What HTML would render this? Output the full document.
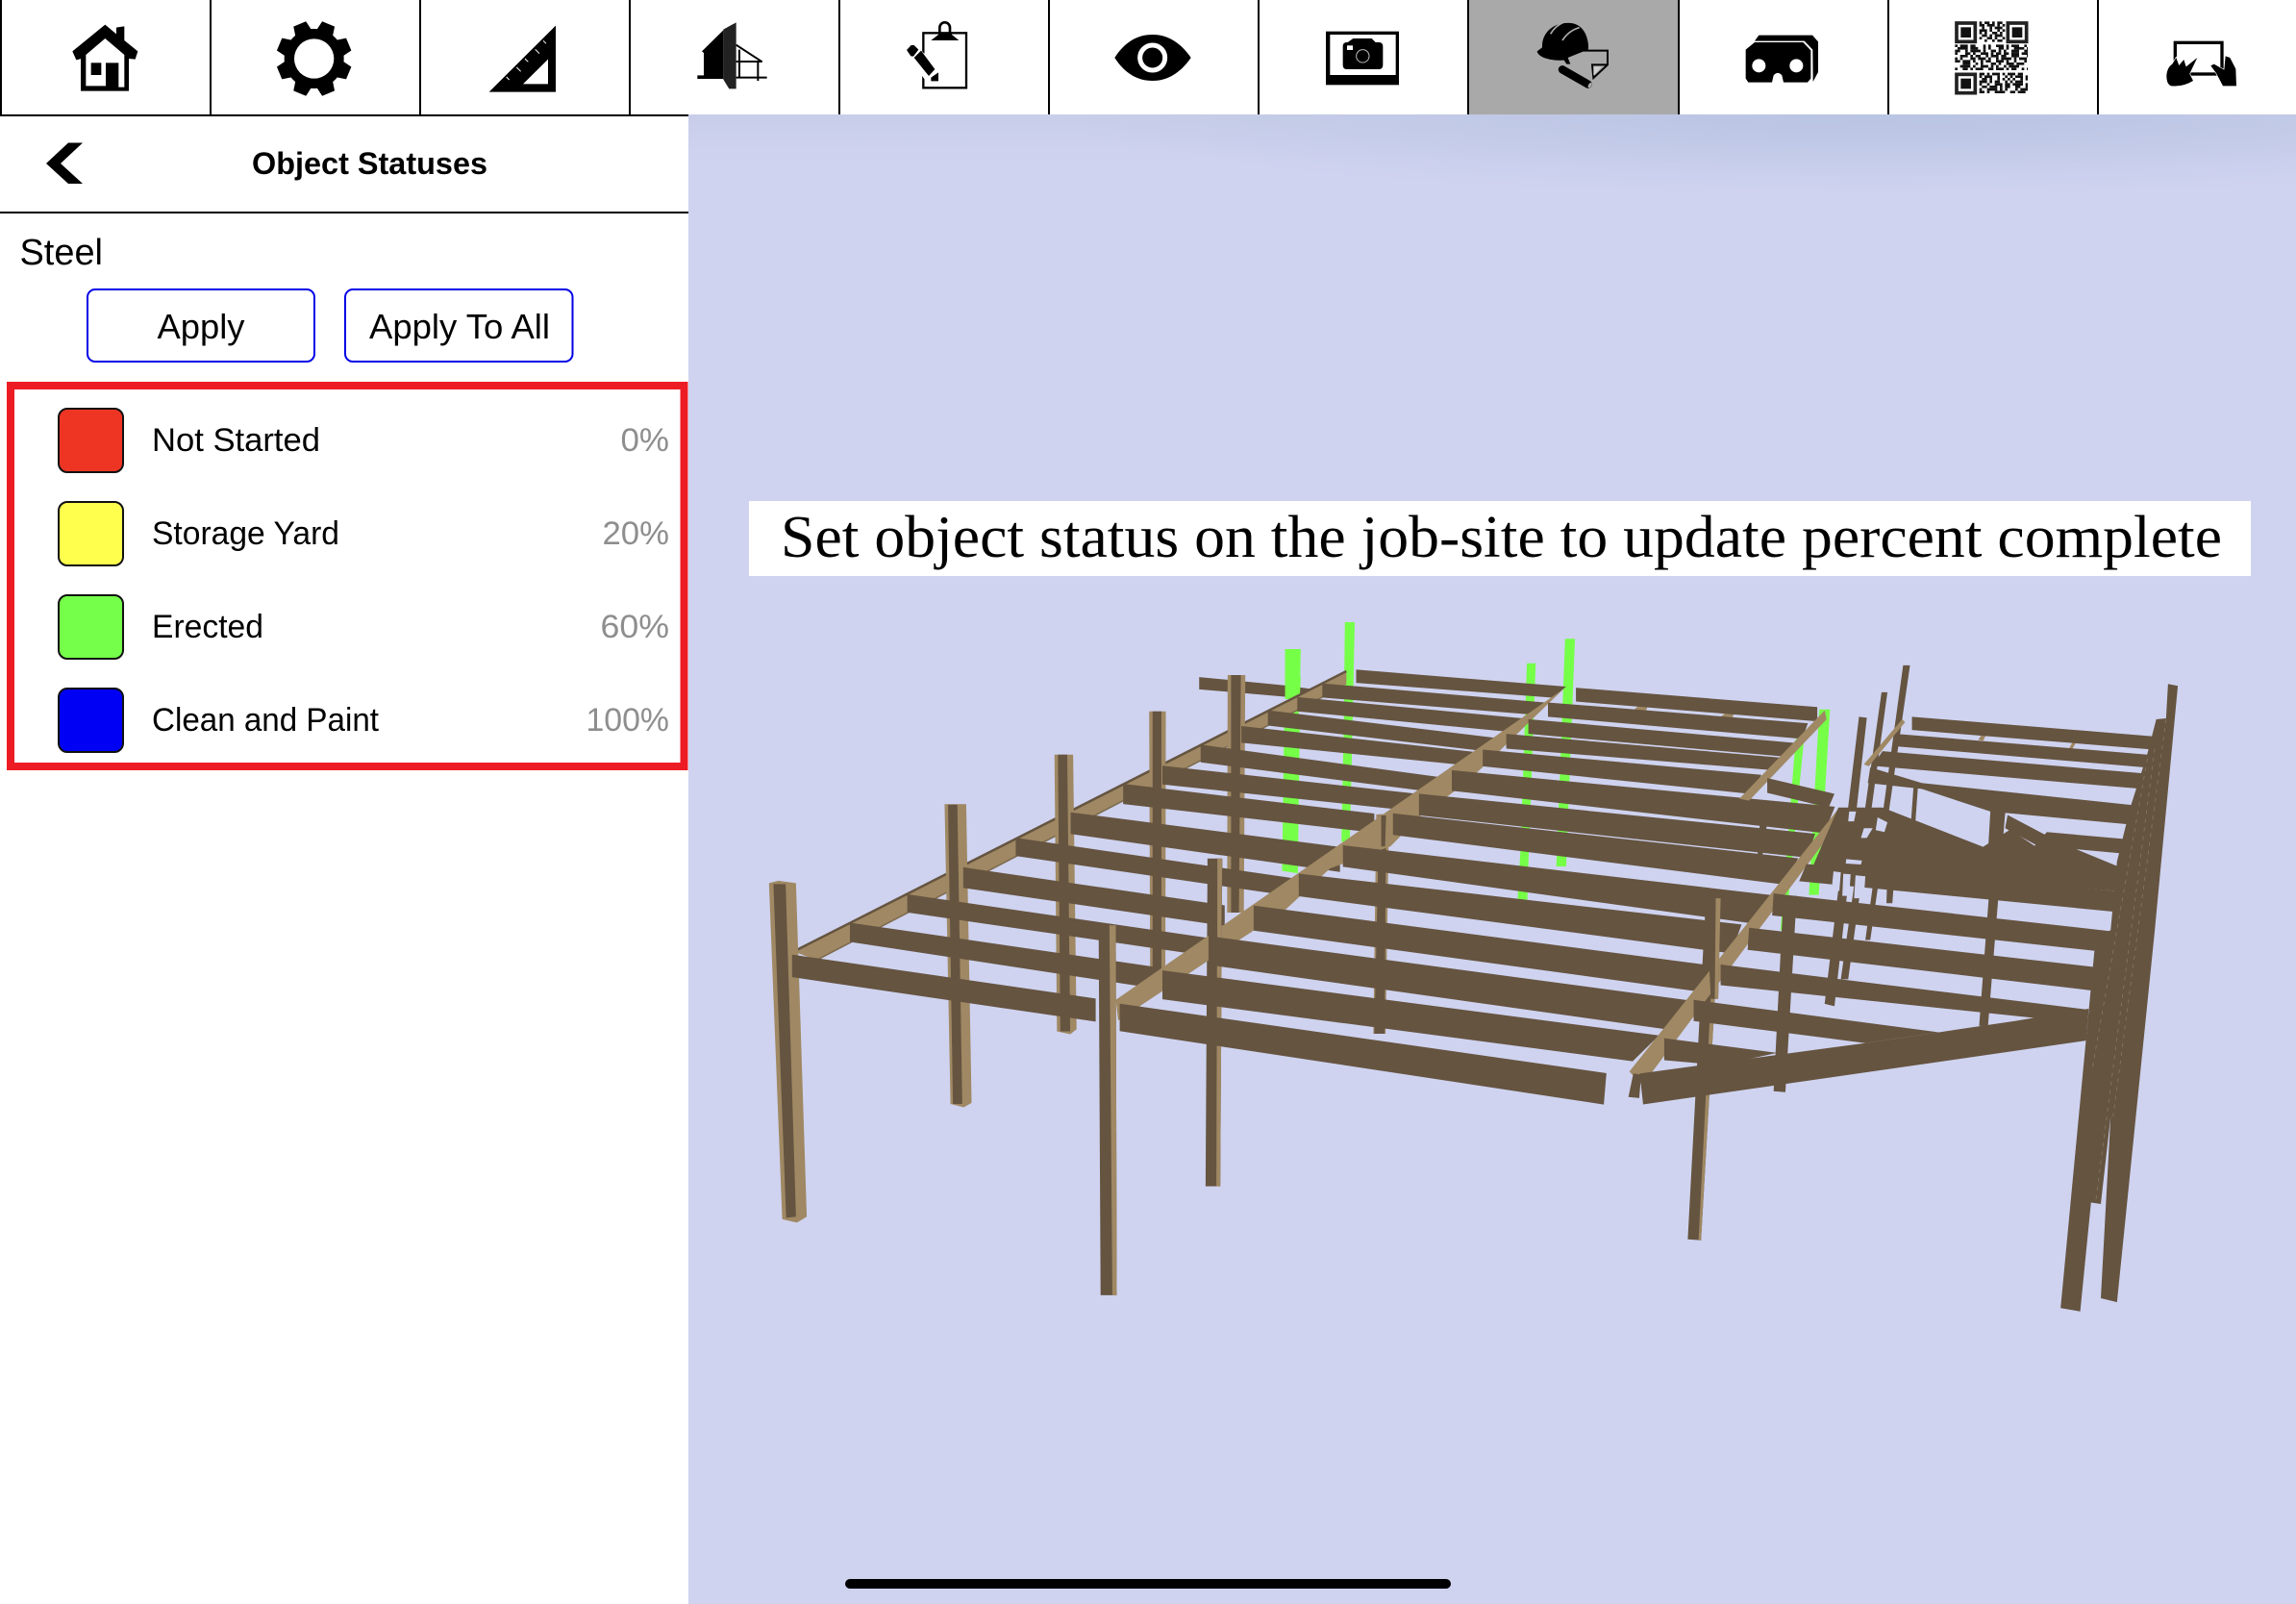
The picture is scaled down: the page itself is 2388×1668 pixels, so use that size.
<!DOCTYPE html>
<html lang="en">
<head>
<meta charset="utf-8">
<title>Object Statuses</title>
<style>
html,body{margin:0;padding:0;background:#fff;width:2388px;height:1668px;overflow:hidden}
svg{position:absolute;left:0;top:0;display:block}
.sans{font-family:"Liberation Sans",sans-serif}
.serif{font-family:"Liberation Serif",serif}
.d{fill:#655440}.l{fill:#9f8863}.g{fill:#76ff47}
.rows polygon{stroke:#655440;stroke-width:4;stroke-linejoin:miter}
</style>
</head>
<body>
<svg width="2388" height="1668" viewBox="0 0 2388 1668" xmlns="http://www.w3.org/2000/svg">
<defs>
<linearGradient id="sky" x1="0" y1="0" x2="0" y2="1"><stop offset="0" stop-color="#c8cee9"/><stop offset="1" stop-color="#cfd3f0"/></linearGradient>
<radialGradient id="glow" gradientUnits="userSpaceOnUse" cx="1950" cy="119" r="1" gradientTransform="translate(1950,119) scale(850,85) translate(-1950,-119)">
<stop offset="0" stop-color="#b9c4e3"/><stop offset="1" stop-color="#b9c4e3" stop-opacity="0"/></radialGradient>
</defs>
<rect width="2388" height="1668" fill="#fff"/>
<rect x="716" y="119" width="1672" height="1549" fill="#cfd3f0"/>
<rect x="716" y="119" width="1672" height="50" fill="url(#sky)"/>
<rect x="716" y="119" width="1672" height="90" fill="url(#glow)"/>

<!-- toolbar -->
<rect x="1527" y="0" width="218" height="119" fill="#a9a9a9"/>
<g fill="#000">
<rect x="0" y="0" width="2" height="119"/><rect x="218" y="0" width="2" height="119"/><rect x="436" y="0" width="2" height="119"/><rect x="654" y="0" width="2" height="119"/><rect x="872" y="0" width="2" height="119"/><rect x="1090" y="0" width="2" height="119"/><rect x="1308" y="0" width="2" height="119"/><rect x="1526" y="0" width="2" height="119"/><rect x="1745" y="0" width="2" height="119"/><rect x="1963" y="0" width="2" height="119"/><rect x="2181" y="0" width="2" height="119"/>
<rect x="0" y="119" width="716" height="2"/>
<rect x="0" y="220" width="716" height="2"/>
</g>

<!-- home, gear, ruler -->
<g transform="translate(60,10) scale(.33333)">
<path d="M148 47L183 76V56L208 52V96L250 130L242 155L222 153L148 90L74 153L58 157L46 130Z"/>
<path d="M72 140L88 128V238H150V166H190V242H208V128L222 140V254H72Z"/>
<rect x="104" y="166" width="32" height="38"/>
<circle cx="800" cy="153" r="93"/>
<g>
<polygon points="-27,-86 -21,-117 21,-117 27,-86" transform="translate(800,153) rotate(22.5)"/>
<polygon points="-27,-86 -21,-117 21,-117 27,-86" transform="translate(800,153) rotate(67.5)"/>
<polygon points="-27,-86 -21,-117 21,-117 27,-86" transform="translate(800,153) rotate(112.5)"/>
<polygon points="-27,-86 -21,-117 21,-117 27,-86" transform="translate(800,153) rotate(157.5)"/>
<polygon points="-27,-86 -21,-117 21,-117 27,-86" transform="translate(800,153) rotate(202.5)"/>
<polygon points="-27,-86 -21,-117 21,-117 27,-86" transform="translate(800,153) rotate(247.5)"/>
<polygon points="-27,-86 -21,-117 21,-117 27,-86" transform="translate(800,153) rotate(292.5)"/>
<polygon points="-27,-86 -21,-117 21,-117 27,-86" transform="translate(800,153) rotate(337.5)"/>
</g>
<circle cx="800" cy="153" r="62" fill="#fff"/>
<path d="M1346 257L1554 50V257ZM1452 232H1530V155Z" fill-rule="evenodd"/>
<path d="M1515 97L1524 106M1490 124L1503 137M1458 153L1468 163M1432 180L1445 193M1400 210L1409 219" stroke="#fff" stroke-width="3" fill="none"/>
</g>

<!-- building, clipboard, eye -->
<g transform="translate(720,10) scale(.33333)">
<path d="M30 130L97 64V216H16V205H36V135Z"/>
<path d="M97 62L137 40V247H115L97 218Z" fill="#222"/>
<path d="M137 110L218 163M137 162H218M147 125V212M205 160V222M137 212H233" stroke="#000" stroke-width="6" fill="none"/>
<rect x="721" y="73" width="134" height="171" fill="none" stroke="#000" stroke-width="7"/>
<path d="M745 96L768 78V72H810V78L832 96Z"/>
<path d="M772 76V56A16 16 0 0 1 804 56V76" fill="none" stroke="#000" stroke-width="8"/>
<polygon points="660,125 685,100 780,190 780,232 735,232" fill="#fff"/>
<path d="M669 126L683 111L692 111L706 125L690 146L682 145Z"/>
<path d="M692 150L714 128L757 186L738 207Z"/>
<path d="M745 212L768 196V223H745Z"/>
<path d="M1318 150C1350 100 1390 78 1436 78C1485 78 1525 105 1556 150C1525 195 1485 222 1436 222C1390 222 1350 200 1318 150Z"/>
<circle cx="1436" cy="150" r="39" fill="none" stroke="#fff" stroke-width="15"/>
</g>

<!-- camera, helmet, vr -->
<g transform="translate(1370,10) scale(.33333)">
<rect x="27" y="68" width="228" height="167"/>
<rect x="40" y="78" width="205" height="126" fill="#fff"/>
<path d="M95 102L112 90H170L182 102H192Q205 102 205 115V172Q205 186 192 186H93Q80 186 80 172V115Q80 102 93 102Z"/>
<rect x="93" y="112" width="18" height="14" fill="#fff"/>
<circle cx="142" cy="145" r="20" fill="none" stroke="#bbb" stroke-width="3"/>
<path d="M686 130L702 118C700 70 740 38 790 42C830 45 848 85 846 124L782 150L790 170L778 170L770 158C730 160 690 150 686 130Z"/>
<path d="M728 76C738 58 752 46 772 38M765 96C778 76 796 62 818 56" stroke="#a9a9a9" stroke-width="5" fill="none"/>
<path d="M830 128H906V172L862 213L858 172H906" fill="none" stroke="#000" stroke-width="6"/>
<path d="M862 178H888L862 206Z" fill="#d0d0d0"/>
<path d="M765 187L845 233" stroke="#000" stroke-width="25" stroke-linecap="round"/>
<ellipse cx="851" cy="236" rx="5" ry="9" fill="#a9a9a9" transform="rotate(30 851 236)"/>
<path d="M1365 98L1378 80H1545L1563 100V195L1547 225L1546 125L1520 98Z"/>
<path d="M1337 125L1365 102H1516L1540 127V215L1530 227H1455L1450 205Q1437 190 1424 205L1419 227H1345L1337 215Z"/>
<circle cx="1378" cy="175" r="21" fill="#fff"/><circle cx="1495" cy="175" r="21" fill="#fff"/>
</g>

<!-- qr + hands -->
<g transform="translate(1900,10) scale(.33333)">
<g fill="none" stroke="#222" stroke-width="11">
<rect x="405" y="42" width="58" height="58"/><rect x="565" y="42" width="58" height="58"/><rect x="405" y="202" width="58" height="58"/>
</g>
<rect x="418" y="55" width="32" height="32" fill="#111"/><rect x="578" y="55" width="32" height="32" fill="#111"/><rect x="418" y="215" width="32" height="32" fill="#111"/>
<g fill="none" stroke="#111" stroke-width="8">
<path d="M476 41H556" stroke-dasharray="8 8 16 8 8 8 16 8"/>
<path d="M476 49H556" stroke-dasharray="16 8 24 8 8 8"/>
<path d="M484 57H556" stroke-dasharray="8 16 8 8 24 8"/>
<path d="M476 65H556" stroke-dasharray="24 8 8 16 8 8"/>
<path d="M476 73H556" stroke-dasharray="8 8 8 16 16 8"/>
<path d="M484 81H556" stroke-dasharray="16 8 8 8 24 8"/>
<path d="M476 89H556" stroke-dasharray="8 16 16 8 8 16"/>
<path d="M492 97H556" stroke-dasharray="8 16 8 8 16 8"/>
<path d="M400 113H627" stroke-dasharray="8 8 24 8 16 24 8 8 8 16 24 8 8 8 24 16"/>
<path d="M408 121H627" stroke-dasharray="32 8 24 16 8 8 8 24 16 8 8 16"/>
<path d="M400 129H627" stroke-dasharray="16 16 8 8 32 8 8 16 16 8 8 8 8 16 24"/>
<path d="M400 137H627" stroke-dasharray="8 24 16 8 8 16 24 8 8 8 16 8 16 8 24"/>
<path d="M416 145H627" stroke-dasharray="24 8 8 8 16 16 8 8 24 8 16 16 24"/>
<path d="M400 153H627" stroke-dasharray="8 8 8 24 16 8 24 8 8 16 8 8 32"/>
<path d="M400 161H627" stroke-dasharray="16 8 24 8 8 16 8 8 16 16 24 8 8"/>
<path d="M424 169H627" stroke-dasharray="24 16 8 8 8 24 16 8 8 16 24 8"/>
<path d="M416 177H627" stroke-dasharray="32 8 8 16 24 8 8 8 8 16 8 8 32"/>
<path d="M400 185H627" stroke-dasharray="8 16 16 8 8 8 24 16 16 8 24 8 8"/>
<path d="M476 201H627" stroke-dasharray="16 8 8 8 24 8 8 8 24 8 16"/>
<path d="M476 209H627" stroke-dasharray="8 8 24 16 8 16 8 8 8 8 24"/>
<path d="M484 217H627" stroke-dasharray="16 8 8 16 8 8 8 8 8 8 8"/>
<path d="M476 225H627" stroke-dasharray="24 8 8 8 16 16 8 8 8 8 24"/>
<path d="M476 233H627" stroke-dasharray="8 16 8 16 24 8 16 8 32"/>
<path d="M484 241H627" stroke-dasharray="16 8 24 8 8 8 16 16 16 16"/>
<path d="M476 249H627" stroke-dasharray="8 16 32 8 8 8 8 24 8 8 24"/>
<path d="M476 257H627" stroke-dasharray="16 8 8 16 32 16 16 8 24"/>
</g>
<rect x="1087" y="103" width="146" height="98" fill="none" stroke="#000" stroke-width="10"/>
<g stroke="#fff" stroke-width="4" paint-order="stroke">
<path d="M1060 205Q1062 180 1078 170L1090 150L1099 174L1114 156L1121 178L1156 150L1132 200L1143 222Q1110 242 1075 238Q1060 234 1060 205Z"/>
<path d="M1198 175L1208 170L1240 188L1244 145L1258 150L1276 185L1278 238H1236L1215 198Z"/>
</g>
</g>

<!-- sidebar -->
<polygon points="48,170 71,148.5 86,148.5 63,170 86,191 71,191"/>
<text class="sans" x="262" y="181" font-size="32.5" font-weight="700" textLength="245" lengthAdjust="spacingAndGlyphs">Object Statuses</text>
<text class="sans" x="20.5" y="275" font-size="38" textLength="86.5" lengthAdjust="spacingAndGlyphs">Steel</text>
<rect x="91" y="301" width="236" height="75" rx="8" fill="#fff" stroke="#0000e6" stroke-width="2"/>
<rect x="359" y="301" width="236.5" height="75" rx="8" fill="#fff" stroke="#0000e6" stroke-width="2"/>
<text class="sans" x="163.5" y="352" font-size="36" textLength="91" lengthAdjust="spacingAndGlyphs">Apply</text>
<text class="sans" x="384" y="352" font-size="36" textLength="188" lengthAdjust="spacingAndGlyphs">Apply To All</text>

<rect x="11" y="401" width="700.5" height="396" fill="#fff" stroke="#ed1c24" stroke-width="8"/>
<rect x="61" y="425" width="67" height="66" rx="9" fill="#ee3524" stroke="#111" stroke-width="2"/>
<rect x="61" y="522" width="67" height="66" rx="9" fill="#ffff4d" stroke="#111" stroke-width="2"/>
<rect x="61" y="619" width="67" height="66" rx="9" fill="#75ff4a" stroke="#111" stroke-width="2"/>
<rect x="61" y="716" width="67" height="66" rx="9" fill="#0000f5" stroke="#111" stroke-width="2"/>
<g class="sans" font-size="34.5">
<text x="158" y="469" textLength="175" lengthAdjust="spacingAndGlyphs">Not Started</text>
<text x="158" y="566" textLength="195" lengthAdjust="spacingAndGlyphs">Storage Yard</text>
<text x="158" y="663" textLength="116" lengthAdjust="spacingAndGlyphs">Erected</text>
<text x="158" y="760" textLength="236" lengthAdjust="spacingAndGlyphs">Clean and Paint</text>
<g fill="#8e8e8e">
<text x="645.5" y="469" textLength="50.5" lengthAdjust="spacingAndGlyphs">0%</text>
<text x="626.5" y="566" textLength="69.5" lengthAdjust="spacingAndGlyphs">20%</text>
<text x="624.5" y="663" textLength="71.5" lengthAdjust="spacingAndGlyphs">60%</text>
<text x="609.5" y="760" textLength="86.5" lengthAdjust="spacingAndGlyphs">100%</text>
</g>
</g>

<!-- caption -->
<rect x="779" y="521" width="1562" height="78" fill="#fff"/>
<text class="serif" x="812" y="579" font-size="62" textLength="1499" lengthAdjust="spacingAndGlyphs">Set object status on the job-site to update percent complete</text>

<!-- MODEL -->
<!-- greens -->
<g transform="translate(760,500) scale(.5102)" class="g">
<polygon points="1130,343 1162,343 1160,445 1130,445"/>
<polygon points="1142,445 1158,445 1158,480 1142,480"/>
<polygon points="1128,500 1160,500 1156,800 1124,795"/>
<polygon points="1252,288 1272,288 1268,480 1262,740 1245,735 1250,480"/>
</g>
<g transform="translate(1560,600) scale(.5102)" class="g">
<polygon points="55,176 73,176 58,585 56,658 36,658 42,555"/>
<polygon points="133,126 153,126 135,590 115,590"/>
<polygon points="651,270 673,270 650,648 630,648"/>
<polygon points="603,330 620,330 582,720 572,720"/>
</g>

<g transform="translate(760,500) scale(.5102)">
<polygon class="d" points="955,400 1130,417 1190,425 1190,447 1130,440 955,425"/>
<polygon class="g" points="1130,400 1162,400 1160,445 1130,445"/>
<!-- first edge girder -->
<polygon class="l" points="130,960 1255,388 1255,415 175,977"/>
<path d="M133 957L1255 388" stroke="#655440" stroke-width="5" fill="none"/>
<path d="M175 977L1208 440" stroke="#7c6a4e" stroke-width="3" fill="none"/>
<!-- columns -->
<polygon class="l" points="78,820 97,815 133,820 155,1500 135,1512 105,1505"/>
<polygon class="d" points="87,822 112,822 133,1500 113,1502"/>
<polygon class="l" points="436,659 480,659 491,1268 475,1277 448,1270"/>
<polygon class="d" points="443,660 462,660 472,1270 453,1270"/>
<polygon class="l" points="660,558 698,558 705,1118 692,1128 665,1122"/>
<polygon class="d" points="667,558 686,558 692,1122 672,1122"/>
<polygon class="l" points="853,470 887,470 886,1000 855,1000"/>
<polygon class="d" points="860,470 878,470 878,1000 860,1000"/>
<polygon class="l" points="1013,396 1049,396 1046,880 1012,880"/>
<polygon class="d" points="1020,396 1040,396 1036,880 1020,880"/>
<polygon class="d" points="972,770 1002,770 998,1438 968,1438"/>
<polygon class="l" points="992,770 1002,770 998,1438 990,1438"/>
<polygon class="l" points="1316,680 1342,680 1335,1127 1310,1127"/>
<polygon class="d" points="1322,680 1336,680 1333,1127 1312,1127"/>
<!-- left bay beams -->
<g class="d rows">
<polygon points="127,968 742,1057 742,1100 127,1010"/>
<polygon points="245,903 880,995 880,1035 245,938"/>
<polygon points="362,845 975,934 975,967 362,878"/>
<polygon points="476,790 1005,867 1005,905 476,828"/>
<polygon points="583,730 1140,811 1140,844 583,763"/>
<polygon points="695,678 1240,748 1240,795 695,718"/>
<polygon points="802,620 1310,680 1310,715 802,657"/>
<polygon points="882,583 1400,640 1400,672 882,617"/>
<polygon points="960,540 1460,608 1460,636 960,572"/>
<polygon points="1043,502 1520,555 1520,580 1043,532"/>
<polygon points="1097,470 1568,527 1545,550 1097,497"/>
<polygon points="1157,443 1613,486 1590,510 1157,468"/>
<polygon points="1208,415 1663,454 1640,475 1208,440"/>
<polygon points="1277,387 1698,421 1675,440 1277,410"/>
</g>
<!-- middle girder -->
<polygon class="l" points="785,1058 1698,424 1640,480 1535,582 1490,622 1405,684 1345,745 1222,790 1130,875 1035,937 790,1100"/>
<polygon class="d" points="972,770 1002,770 1000,930 974,930"/>
<polygon class="l" points="992,770 1002,770 1000,930 992,930"/>
<polygon class="l" points="1322,680 1342,680 1339,745 1322,745"/>
<polygon class="d" points="1326,682 1336,682 1334,745 1326,745"/>
</g>

<g transform="translate(1560,600) scale(.5102)">
<!-- thin columns -->
<g class="d">
<polygon points="732,285 748,287 682,875 662,870"/>
<polygon points="778,235 790,235 710,820 695,820"/>
<polygon points="822,180 836,180 755,740 745,740"/>
<polygon points="790,600 805,600 800,665 788,665"/>
<polygon points="843,430 852,430 847,500 838,500"/>
<polygon points="1010,475 1030,480 995,915 977,915"/>
<polygon points="578,650 605,650 582,1050 558,1048"/>
<polygon points="420,655 450,655 410,1352 383,1350"/>
<polygon points="530,500 545,500 535,570 525,570"/>
</g>
<polygon class="l" points="440,655 450,655 410,1352 405,1352"/>
<!-- marks on top row -->
<g class="l">
<polygon points="272,272 300,247 308,247 298,272"/>
<polygon points="448,287 478,262 484,262 474,287"/>
<polygon points="975,332 990,310 996,312 985,334"/>
<polygon points="1160,350 1170,332 1176,335 1166,352"/>
</g>
<!-- right bay rows -->
<g class="d rows">
<polygon points="-773,872 215,1013 210,1073 -773,924"/>
<polygon points="-686,804 320,936 270,985 -686,859"/>
<polygon points="-592,734 385,865 340,920 -592,789"/>
<polygon points="-500,672 440,795 420,845 -500,719"/>
<polygon points="-408,607 490,710 470,765 -408,649"/>
<polygon points="-318,549 550,650 520,705 -318,589"/>
<polygon points="-216,484 605,575 580,625 -216,524"/>
<polygon points="-163,444 640,525 625,570 -163,484"/>
<polygon points="-96,396 680,470 660,520 -96,434"/>
<polygon points="-33,354 530,405 510,440 -33,384"/>
<polygon points="15,322 570,370 560,392 15,348"/>
<polygon points="60,292 600,340 590,365 60,318"/>
<polygon points="100,258 625,300 615,328 100,283"/>
<polygon points="157,228 645,267 645,292 157,252"/>
</g>
<!-- second girder -->
<polygon class="l" points="662,272 666,290 508,456 488,452"/>
<polygon class="l" points="692,470 702,486 290,1036 264,1008"/>
<polygon class="d" points="262,1060 272,1012 288,1014 284,1062"/>
<polygon class="d" points="545,410 682,442 670,470 545,440"/>
<polygon class="l" points="820,290 826,296 752,386 742,382"/>
<!-- right of second girder -->
<g class="d">
<polygon points="625,585 1255,640 1250,682 610,620"/>
<polygon points="558,645 1245,722 1240,765 555,690"/>
<polygon points="508,715 1212,795 1208,843 505,760"/>
<polygon points="450,790 1200,882 1198,910 450,832"/>
<polygon points="395,862 895,928 745,950 395,905"/>
<polygon points="335,940 565,970 450,995 335,985"/>
<polygon points="285,1012 745,950 895,928 1050,905 1200,880 1195,945 292,1075"/>
<polygon points="640,585 690,470 780,470 985,550 1040,515 1090,548 1115,520 1285,535 1285,565 1175,555 1260,590 1258,640 640,592"/>
<polygon points="1035,485 1120,530 1100,550 1030,512"/>
<polygon points="755,388 860,420 1290,465 1290,505 1000,478 860,432 750,420"/>
<polygon points="780,355 1310,400 1310,432 760,385"/>
<polygon points="810,320 1320,362 1315,388 805,345"/>
<polygon points="840,285 1335,325 1335,352 840,312"/>
<polygon points="1000,475 1030,480 1020,560 995,560"/>
<polygon points="1382,222 1362,218 1358,288 1338,290 1320,360 1285,470 1258,580 1245,720 1215,730 1143,1490 1183,1497 1205,1275 1225,1278 1245,1100 1225,1470 1258,1478 1335,720"/>
</g>
<!-- small gaps in junction mass -->
<g fill="#cfd3f0">
<polygon points="712,478 726,478 722,498 710,498"/>
<polygon points="742,512 760,512 748,532 736,532"/>
<polygon points="770,490 790,500 784,520 766,516"/>
<polygon points="706,575 738,578 736,586 705,584"/>
<polygon points="680,600 695,602 692,640 676,640"/>
<polygon points="700,605 715,606 712,650 698,650"/>
<polygon points="725,608 745,610 742,655 722,655"/>
</g>
<path d="M1335 350L1215 1270M1358 290L1250 1100M1320 370L1208 1000" stroke="#8a7a60" stroke-width="1.5" stroke-dasharray="8 10" fill="none"/>
<!-- front column top -->
<polygon class="d" points="420,655 450,655 445,860 430,860"/>
<polygon class="l" points="440,655 450,655 445,860 438,860"/>
</g>

<g transform="translate(760,500) scale(.5102)">
<!-- front column -->
<polygon class="d" points="750,906 785,906 787,1660 754,1660"/>
<polygon class="l" points="772,906 785,906 787,1660 778,1660"/>
</g>

<!-- home indicator -->
<rect x="879" y="1642" width="630" height="10" rx="5" fill="#000"/>
</svg>
</body>
</html>
